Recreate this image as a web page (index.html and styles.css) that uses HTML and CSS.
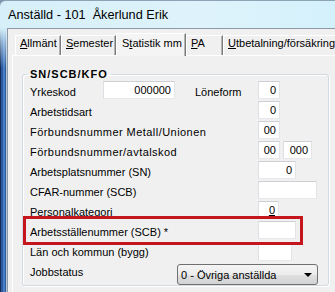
FILE: index.html
```html
<!DOCTYPE html>
<html lang="sv">
<head>
<meta charset="utf-8">
<title>Anställd</title>
<link rel="stylesheet" href="styles.css">
</head>
<body>
<div class="window">
  <div class="titlebar">Anställd - 101  Åkerlund Erik</div>
  <div class="body-row">
    <div class="frame-left"></div>
    <div class="client">
      <div class="tabs">
        <div class="tab t1"><u>A</u>llmänt</div>
        <div class="tab t2"><u>S</u>emester</div>
        <div class="tab t3 active">S<u>t</u>atistik mm</div>
        <div class="tab t4"><u>P</u>A</div>
        <div class="tab t5"><u>U</u>tbetalning/försäkring</div>
      </div>
      <div class="panel">
        <fieldset class="group">
          <legend>SN/SCB/KFO</legend>
          <div class="row">
            <div class="lbl w-yrk">Yrkeskod</div>
            <div class="fld w72">000000</div>
            <div class="lbl w-lon">Löneform</div>
            <div class="fld w22">0</div>
          </div>
          <div class="row">
            <div class="lbl">Arbetstidsart</div>
            <div class="fld w22">0</div>
          </div>
          <div class="row">
            <div class="lbl wide">Förbundsnummer Metall/Unionen</div>
            <div class="fld w22">00</div>
          </div>
          <div class="row">
            <div class="lbl wide">Förbundsnummer/avtalskod</div>
            <div class="fld w22">00</div>
            <div class="fld w29 gap">000</div>
          </div>
          <div class="row">
            <div class="lbl">Arbetsplatsnummer (SN)</div>
            <div class="fld w38">0</div>
          </div>
          <div class="row">
            <div class="lbl">CFAR-nummer (SCB)</div>
            <div class="fld w59"></div>
          </div>
          <div class="row">
            <div class="lbl">Personalkategori</div>
            <div class="fld w21"><span class="caret">0</span></div>
          </div>
          <div class="row marked">
            <div class="lbl">Arbetsställenummer (SCB) *</div>
            <div class="fld w38"></div>
            <div class="highlight"></div>
          </div>
          <div class="row">
            <div class="lbl">Län och kommun (bygg)</div>
            <div class="fld w34 low"></div>
          </div>
          <div class="row">
            <div class="lbl w-job">Jobbstatus</div>
            <div class="select"><span>0 - Övriga anställda</span><span class="arrow"></span></div>
          </div>
        </fieldset>
      </div>
    </div>
  </div>
</div>
</body>
</html>
```
FILE: styles.css
```css
html, body {
  margin: 0;
  padding: 0;
}
body {
  width: 335px;
  height: 292px;
  overflow: hidden;
  background: #7e96ad;
  font-family: "Liberation Sans", Arial, sans-serif;
  font-size: 11px;
  color: #000;
}
.window {
  height: 292px;
  display: flex;
  flex-direction: column;
  background: linear-gradient(to right, #d6eff9 0%, #def3fb 60%, #d4f1fb 100%);
  border-top: 1px solid #8ea3b3;
  border-top-left-radius: 6px;
  box-sizing: border-box;
}
.titlebar {
  height: 27px;
  line-height: 28px;
  padding-left: 8px;
  font-size: 12.7px;
  white-space: pre;
  flex: none;
}
.body-row {
  flex: 1;
  display: flex;
}
.frame-left {
  width: 7px;
  flex: none;
  background:
    linear-gradient(to bottom, rgba(214, 238, 249, 1) 0px, rgba(214, 238, 249, 0.6) 14px, rgba(214, 238, 249, 0) 40px),
    linear-gradient(to right, #142b56 0 1px, #2b5aa0 1px 3px, #4a7fc3 3px 5px, #2c589c 5px 6px, #b9c8d6 6px 7px);
}
.client {
  flex: 1;
  background: #f0f0f0;
  border-left: 1px solid #8d9aa6;
  border-top: 1px solid #8d9aa6;
  display: flex;
  flex-direction: column;
}
.tabs {
  display: flex;
  align-items: flex-end;
  height: 23px;
  margin-top: 4px;
  padding-left: 7px;
  flex: none;
}
.tab {
  height: 20px;
  margin-bottom: 1px;
  box-sizing: border-box;
  padding: 0 0 0 4px;
  line-height: 14px;
  border-top: 1px solid #fff;
  border-left: 1px solid #fff;
  border-right: 1px solid #7a7a7a;
  box-shadow: inset -1px 0 0 #b4b4b4;
  background: #f0f0f0;
  white-space: nowrap;
  flex: none;
}
.tab.active {
  height: 23px;
  margin-bottom: 0;
  padding-top: 2px;
  padding-left: 5px;
  position: relative;
  z-index: 1;
  background: #f4f4f4;
}
.t1 { width: 46px; }
.t2 { width: 55px; }
.t3 { width: 70px; }
.t4 { width: 37px; }
.t5 { width: 130px; }
.panel {
  flex: 1;
  margin-top: -1px;
  margin-left: 4px;
  border-top: 1px solid #fff;
  border-left: 1px solid #fff;
  padding: 12px 0 0 9px;
}
.group {
  margin: 0;
  padding: 1px 0 4px 0;
  width: 307px;
  box-sizing: border-box;
  border: 1px solid #d2dbe1;
  border-radius: 3px;
  box-shadow: 1px 1px 0 #fff, inset 1px 1px 0 #fff;
}
.group legend {
  margin-left: 4px;
  padding: 0 3px;
  font-weight: bold;
  letter-spacing: 1px;
  line-height: 12px;
}
.row {
  display: flex;
  align-items: flex-start;
  height: 20px;
  padding-left: 7px;
}
.lbl {
  width: 228px;
  padding-top: 3px;
  line-height: 16px;
  white-space: nowrap;
  flex: none;
}
.lbl.wide {
  letter-spacing: 0.45px;
}
.w-yrk { width: 73px; }
.w-lon { width: 63px; margin-left: 20px; }
.w-job { width: 147px; }
.fld {
  height: 18px;
  box-sizing: border-box;
  background: #fff;
  border: 1px solid;
  border-color: #cdd0d4 #e2e4e8 #e6e8eb #dcdfe3;
  text-align: right;
  padding-right: 3px;
  line-height: 16px;
  flex: none;
}
.w21 { width: 21px; }
.w22 { width: 22px; }
.w29 { width: 29px; }
.w34 { width: 34px; }
.w38 { width: 38px; }
.w59 { width: 59px; }
.w72 { width: 72px; }
.gap { margin-left: 3px; }
.low { margin-top: 2px; }
.caret {
  text-decoration: underline;
}
.marked {
  position: relative;
}
.highlight {
  position: absolute;
  left: 0;
  top: -5px;
  width: 280px;
  height: 29px;
  box-sizing: border-box;
  border: 3px solid #c4161c;
}
.select {
  width: 141px;
  height: 21px;
  margin-top: 3px;
  box-sizing: border-box;
  border: 1px solid #707070;
  border-radius: 3px;
  background: linear-gradient(to bottom, #f4f4f4 0%, #ececec 50%, #e0e0e0 51%, #d3d3d3 100%);
  display: flex;
  align-items: center;
  justify-content: space-between;
  padding: 0 5px 0 3px;
  white-space: nowrap;
  flex: none;
}
.arrow {
  width: 0;
  height: 0;
  border-left: 4px solid transparent;
  border-right: 4px solid transparent;
  border-top: 4px solid #000;
}
```
